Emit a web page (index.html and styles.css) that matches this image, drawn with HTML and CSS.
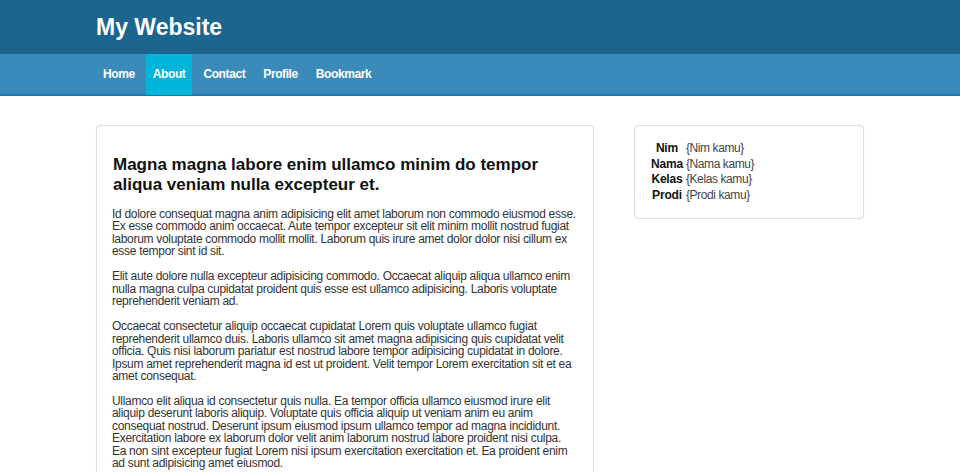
FILE: index.html
```html
<!DOCTYPE html>
<html>
<head>
<meta charset="utf-8">
<title>My Website</title>
<link rel="stylesheet" href="styles.css">
</head>
<body>
<header class="site-header">
  <div class="wrap">
    <h1 class="brand">My Website</h1>
  </div>
</header>
<nav class="site-nav">
  <div class="wrap nav-list">
    <a class="nav-link" href="#">Home</a>
    <a class="nav-link active" href="#">About</a>
    <a class="nav-link" href="#">Contact</a>
    <a class="nav-link" href="#">Profile</a>
    <a class="nav-link" href="#">Bookmark</a>
  </div>
</nav>
<div class="wrap content">
  <main class="card main-card">
    <h2 class="title">Magna magna labore enim ullamco minim do tempor aliqua veniam nulla excepteur et.</h2>
    <p>Id dolore consequat magna anim adipisicing elit amet laborum non commodo eiusmod esse. Ex esse commodo anim occaecat. Aute tempor excepteur sit elit minim mollit nostrud fugiat laborum voluptate commodo mollit mollit. Laborum quis irure amet dolor dolor nisi cillum ex esse tempor sint id sit.</p>
    <p>Elit aute dolore nulla excepteur adipisicing commodo. Occaecat aliquip aliqua ullamco enim nulla magna culpa cupidatat proident quis esse est ullamco adipisicing. Laboris voluptate reprehenderit veniam ad.</p>
    <p>Occaecat consectetur aliquip occaecat cupidatat Lorem quis voluptate ullamco fugiat reprehenderit ullamco duis. Laboris ullamco sit amet magna adipisicing quis cupidatat velit officia. Quis nisi laborum pariatur est nostrud labore tempor adipisicing cupidatat in dolore. Ipsum amet reprehenderit magna id est ut proident. Velit tempor Lorem exercitation sit et ea amet consequat.</p>
    <p>Ullamco elit aliqua id consectetur quis nulla. Ea tempor officia ullamco eiusmod irure elit aliquip deserunt laboris aliquip. Voluptate quis officia aliquip ut veniam anim eu anim consequat nostrud. Deserunt ipsum eiusmod ipsum ullamco tempor ad magna incididunt. Exercitation labore ex laborum dolor velit anim laborum nostrud labore proident nisi culpa. Ea non sint excepteur fugiat Lorem nisi ipsum exercitation exercitation et. Ea proident enim ad sunt adipisicing amet eiusmod.</p>
  </main>
  <aside class="card side-card">
    <table class="info">
      <tr><th>Nim</th><td>{Nim kamu}</td></tr>
      <tr><th>Nama</th><td>{Nama kamu}</td></tr>
      <tr><th>Kelas</th><td>{Kelas kamu}</td></tr>
      <tr><th>Prodi</th><td>{Prodi kamu}</td></tr>
    </table>
  </aside>
</div>
</body>
</html>
```
FILE: styles.css
```css
* { box-sizing: border-box; }
html, body { margin: 0; padding: 0; }
body {
  font-family: "Liberation Sans", Arial, sans-serif;
  background: #fff;
  color: #333;
}
.wrap {
  width: 768px;
  margin: 0 auto;
}
.site-header {
  background: #1c658e;
  height: 54px;
}
.brand {
  margin: 0;
  color: #fff;
  font-size: 23px;
  font-weight: bold;
  line-height: 54px;
}
.site-nav {
  background: #3a8aba;
  height: 42px;
  border-bottom: 2px solid #1f78ab;
}
.nav-list {
  display: flex;
  gap: 4px;
  height: 40px;
}
.nav-link {
  display: block;
  padding: 0 7px;
  line-height: 41px;
  height: 41px;
  color: #fff;
  font-size: 12px;
  letter-spacing: -0.4px;
  font-weight: bold;
  text-decoration: none;
}
.nav-link.active {
  background: #00b5d9;
}
.content {
  display: flex;
  align-items: flex-start;
  gap: 40px;
  margin-top: 29px;
}
.card {
  border: 1px solid #dedede;
  border-radius: 4px;
  box-shadow: 0 0 1px rgba(0,0,0,0.08);
  background: #fff;
}
.main-card {
  width: 498px;
  padding: 29px 15px 16px;
}
.title {
  margin: 0 0 13px 1px;
  color: #111;
  font-size: 17px;
  line-height: 20px;
  font-weight: bold;
}
.main-card p {
  margin: 0 0 12.5px;
  font-size: 12px;
  letter-spacing: -0.3px;
  line-height: 12.45px;
  color: #333;
}
.side-card {
  width: 230px;
  padding: 14px 13px 13px;
}
.info {
  font-size: 12px;
  color: #444;
  border-spacing: 2px;
}
.info th {
  color: #111;
  font-weight: bold;
  padding: 0 1px;
  line-height: 13.7px;
  letter-spacing: -0.2px;
}
.info td {
  padding: 0;
  line-height: 13.7px;
  letter-spacing: -0.4px;
}
```
